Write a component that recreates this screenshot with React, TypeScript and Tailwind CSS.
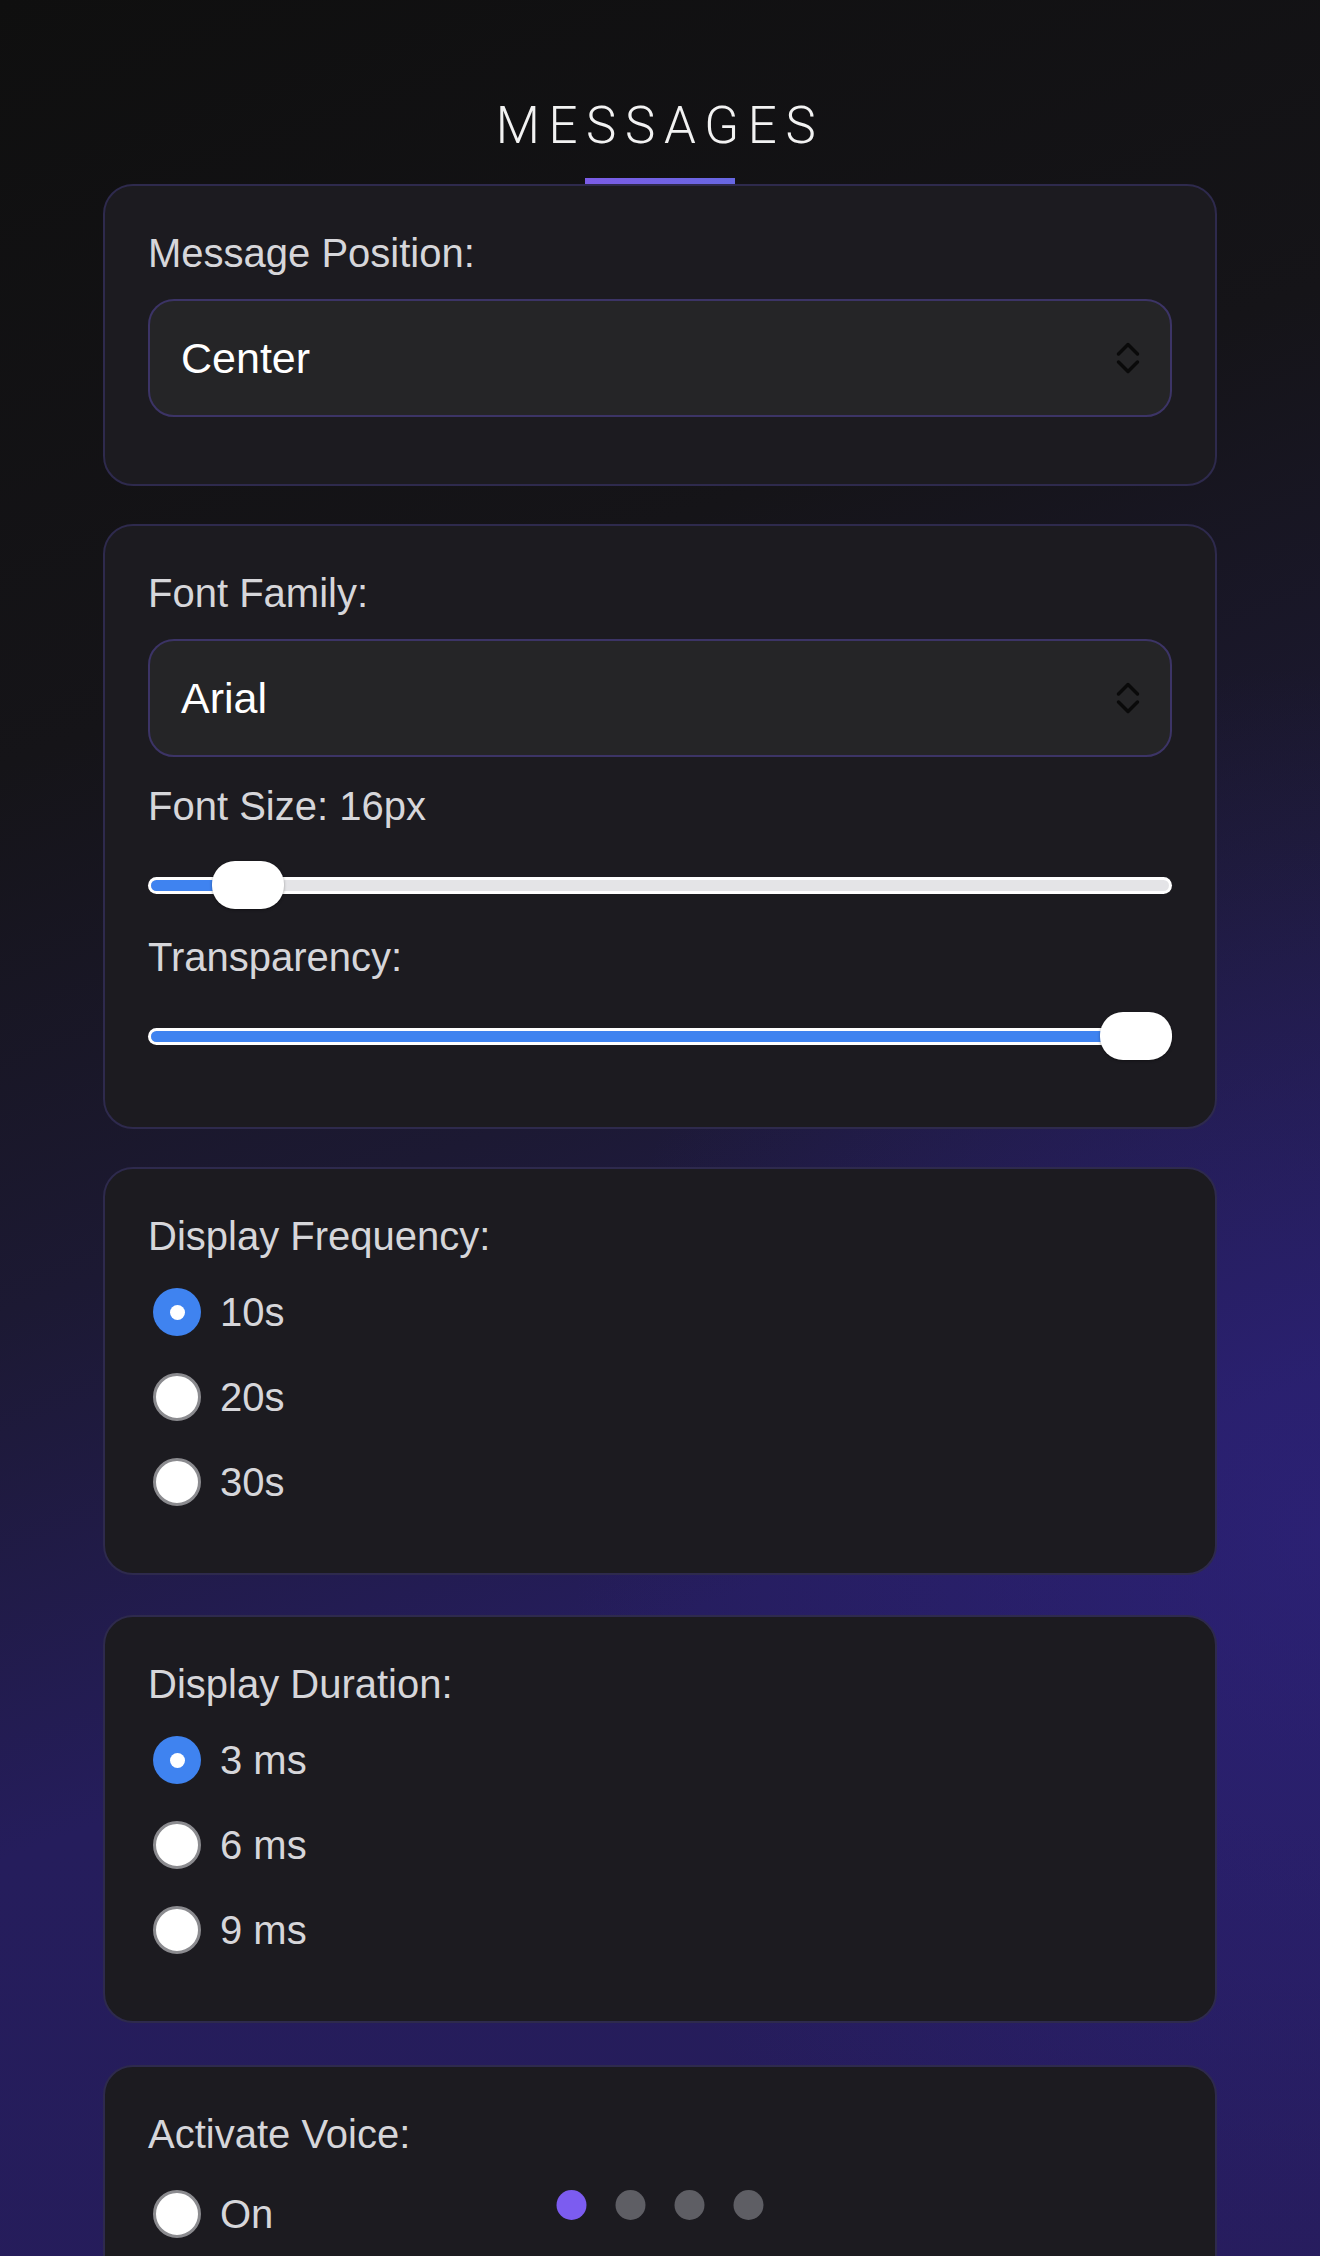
import { useState } from "react";

const labelCls = "block text-[40px] leading-[48px] text-[#d6d6da]";

function Card({ children, className = "" }: { children: React.ReactNode; className?: string }) {
  return (
    <section className={`rounded-[30px] border-2 border-[#2e2a4d] bg-[#1c1b20] px-[43px] pt-[43px] pb-[67px] ${className}`}>
      {children}
    </section>
  );
}

function SelectBox({ value }: { value: string }) {
  return (
    <div className="mt-[22px] flex h-[118px] items-center justify-between rounded-[26px] border-2 border-[#3c3466] bg-[#252527] pl-[31px] pr-[30px]">
      <span className="text-[43px] text-white">{value}</span>
      <svg width="24" height="34" viewBox="0 0 24 34" fill="none" stroke="#0a0a0a" strokeWidth="3.5" strokeLinecap="round" strokeLinejoin="round">
        <path d="M2.5 13 L12 3.5 L21.5 13" />
        <path d="M2.5 21 L12 30.5 L21.5 21" />
      </svg>
    </div>
  );
}

function Slider({ percent }: { percent: number }) {
  // thumb travels inside the track, 72px wide
  return (
    <div className="relative flex h-[48px] items-center">
      <div className="h-[17px] w-full rounded-full bg-white p-[3px]">
        <div className="flex h-full overflow-hidden rounded-full bg-[#e4e4e7]">
          <div className="h-full bg-[#3f83f0]" style={{ width: `calc(${percent} * (100% - 72px) + 36px)` }} />
        </div>
      </div>
      <div
        className="absolute top-0 h-[48px] w-[72px] rounded-[23px] bg-white shadow-[0_1px_3px_rgba(0,0,0,0.35)]"
        style={{ left: `calc(${percent} * (100% - 72px))` }}
      />
    </div>
  );
}

function RadioGroup({ options, selected, className = "mt-[28px]" }: { options: string[]; selected: string; className?: string }) {
  return (
    <div className={`flex flex-col gap-[37px] ${className}`}>
      {options.map((opt) => (
        <label key={opt} className="flex h-[48px] items-center">
          {opt === selected ? (
            <span className="ml-[5px] flex h-[48px] w-[48px] items-center justify-center rounded-full bg-[#3f83f0]">
              <span className="h-[15px] w-[15px] rounded-full bg-white" />
            </span>
          ) : (
            <span className="ml-[5px] h-[48px] w-[48px] rounded-full border-[3px] border-[#8b8b8f] bg-white" />
          )}
          <span className="ml-[19px] text-[40px] text-[#d6d6da]">{opt}</span>
        </label>
      ))}
    </div>
  );
}

export default function App() {
  const [page] = useState(0);

  return (
    <div
      className="relative h-[2256px] overflow-hidden bg-[radial-gradient(ellipse_at_100%_68%,rgba(48,36,135,0.55)_0%,transparent_40%),linear-gradient(160deg,#0f0f0f_0%,#151418_28%,#1c1933_48%,#251d5c_68%,#261c5a_100%)] font-['Liberation_Sans',Arial,sans-serif]"
    >
      <div className="mx-auto w-[1114px] pt-[100px]">
        <h1 className="text-center font-['Roboto',sans-serif] text-[51px] font-light leading-none tracking-[0.17em] text-[#f2f2f2]">
          MESSAGES
        </h1>
        <div className="mx-auto mt-[27px] h-[6px] w-[150px] bg-gradient-to-r from-[#7b5ce6] to-[#6767e2]" />

        <div className="flex flex-col gap-[38px]">
          <Card>
            <span className={labelCls}>Message Position:</span>
            <SelectBox value="Center" />
          </Card>

          <Card>
            <span className={labelCls}>Font Family:</span>
            <SelectBox value="Arial" />
            <span className={`${labelCls} mt-[25px]`}>Font Size: 16px</span>
            <div className="mt-[31px]">
              <Slider percent={0.067} />
            </div>
            <span className={`${labelCls} mt-[24px]`}>Transparency:</span>
            <div className="mt-[31px]">
              <Slider percent={1} />
            </div>
          </Card>

          <Card>
            <span className={labelCls}>Display Frequency:</span>
            <RadioGroup options={["10s", "20s", "30s"]} selected="10s" />
          </Card>

          <Card className="mt-[2px]">
            <span className={labelCls}>Display Duration:</span>
            <RadioGroup options={["3 ms", "6 ms", "9 ms"]} selected="3 ms" />
          </Card>

          <Card className="mt-[4px]">
            <span className={labelCls}>Activate Voice:</span>
            <RadioGroup options={["On", "Off"]} selected="" className="mt-[32px]" />
          </Card>
        </div>
      </div>

      <div className="absolute bottom-[36px] left-1/2 flex -translate-x-1/2 gap-[29px]">
        {[0, 1, 2, 3].map((i) => (
          <span key={i} className={`h-[30px] w-[30px] rounded-full ${i === page ? "bg-[#7c5cf0]" : "bg-[#5e5e64]"}`} />
        ))}
      </div>
    </div>
  );
}
